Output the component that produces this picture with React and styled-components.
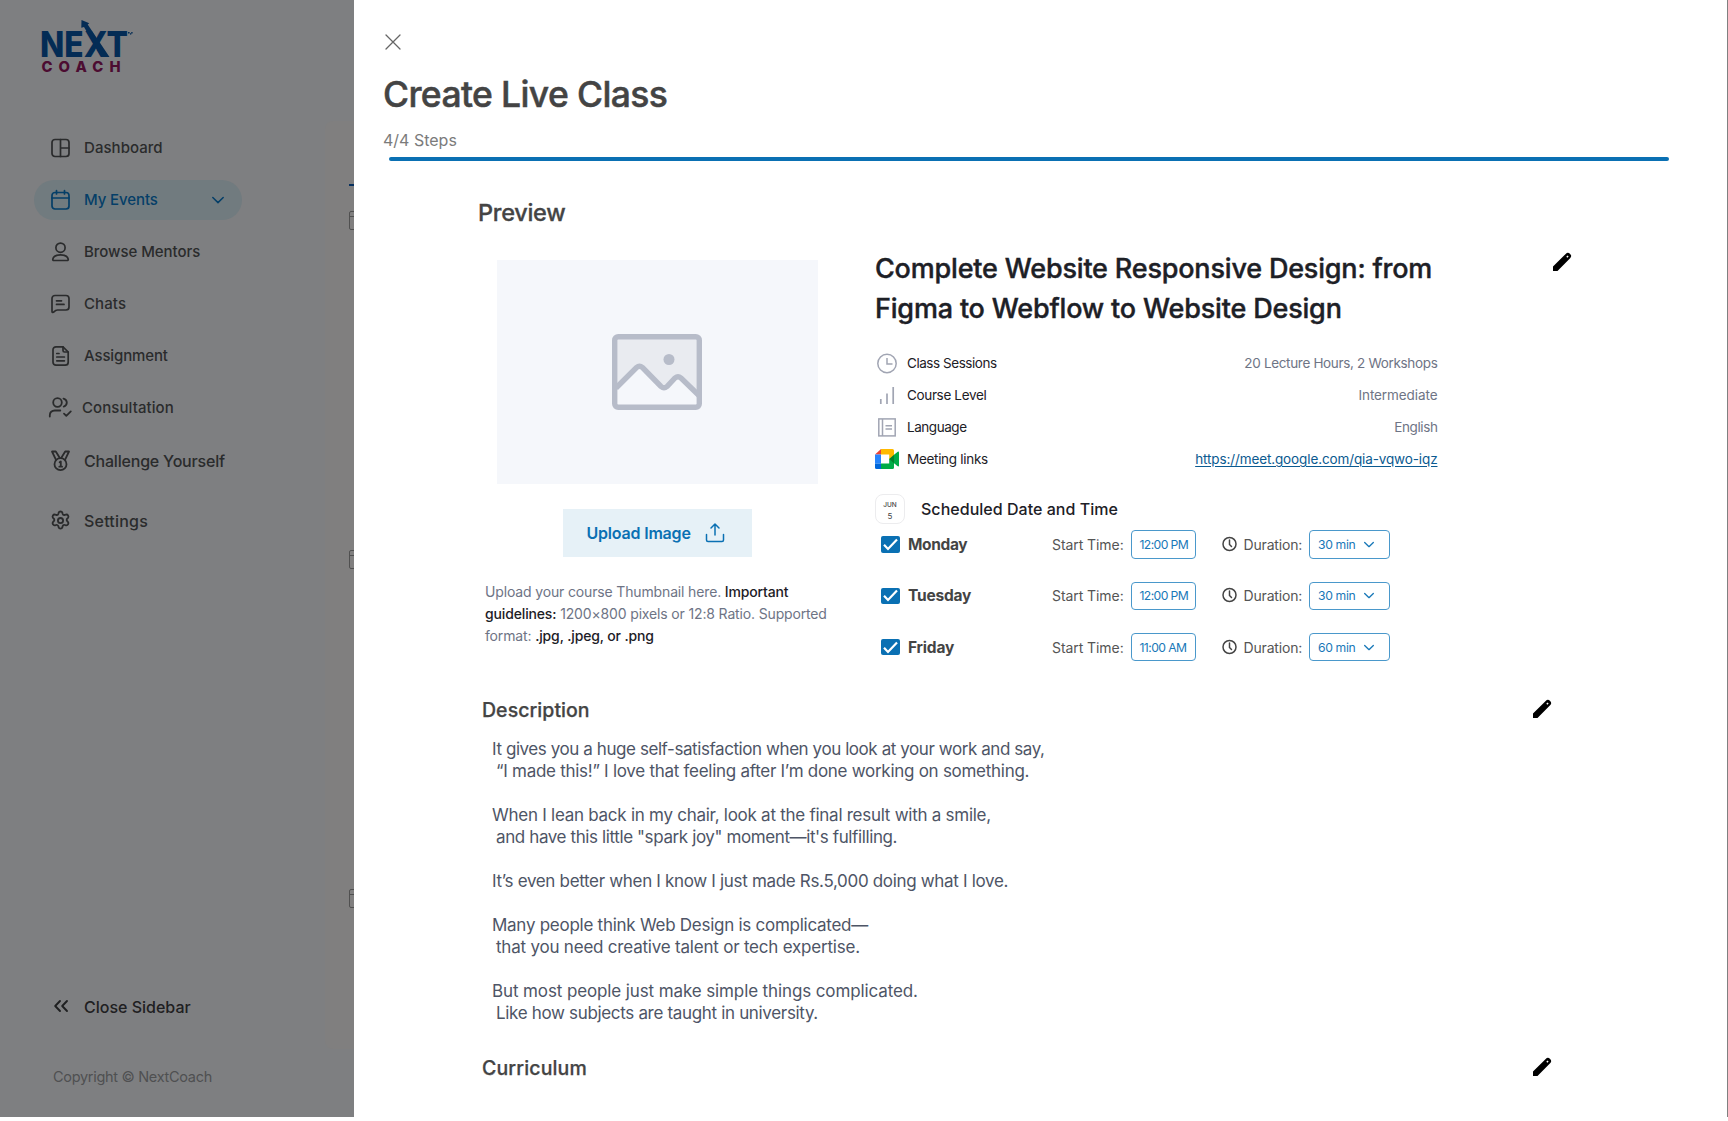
import React from "react";
import styled, { createGlobalStyle } from "styled-components";

const GlobalStyle = createGlobalStyle`
  *, *::before, *::after { box-sizing: border-box; }
  html, body { margin: 0; padding: 0; background: #fff; overflow: hidden; }
  body { font-family: Inter, "Liberation Sans", sans-serif; }
  h1, h2, h3, p { margin: 0; font-weight: 500; }
  svg { display: block; flex: none; overflow: visible; }
  button { font: inherit; border: 0; padding: 0; background: none; }
`;

const Frame = styled.div`
  display: flex;
  width: 1728px;
  height: 1117px;
  background: #808080;
  overflow: hidden;
`;

/* ---------- dimmed page behind the drawer ---------- */

const Sidebar = styled.aside`
  display: flex;
  flex-direction: column;
  width: 325px;
  background: #7e7f81;
`;

const LogoLink = styled.div`
  margin: 19px 0 0 41px;
  height: 56px;
`;

const Nav = styled.nav`
  display: flex;
  flex-direction: column;
  margin: 53px 0 0 34px;
  width: 208px;
`;

const NavItem = styled.div`
  display: flex;
  align-items: center;
  height: 40px;
  margin-bottom: ${(p) => p.$after ?? 12}px;
  padding: 0 18px 0 ${(p) => p.$pad ?? 16}px;
  border-radius: 20px;
  color: ${(p) => (p.$active ? "#053f68" : "#2a2b2c")};
  background: ${(p) => (p.$active ? "#717b7f" : "transparent")};
`;

const NavLabel = styled.span`
  flex: 1;
  margin-left: ${(p) => p.$gap ?? 14}px;
  padding-bottom: ${(p) => (p.$large ? 0 : 2)}px;
  font-size: ${(p) => (p.$large ? 16 : 15)}px;
  font-weight: 500;
  letter-spacing: ${(p) => p.$ls ?? 0}px;
  white-space: nowrap;
`;

const SidebarFooter = styled.div`
  display: flex;
  flex-direction: column;
  gap: 50px;
  margin: auto 0 30px 53px;
`;

const CloseSidebar = styled.div`
  display: flex;
  align-items: center;
  gap: 15px;
  height: 20px;
  font-size: 16px;
  font-weight: 500;
  letter-spacing: 0;
  color: #1f2021;
`;

const Copyright = styled.div`
  height: 20px;
  line-height: 20px;
  font-size: 14.5px;
  letter-spacing: ${(p) => p.$ls}px;
  color: #4f5051;
`;

const PageEdge = styled.div`
  display: flex;
  flex-direction: column;
  width: 29px;
  background: #7e7f81;
`;

const PageCard = styled.div`
  display: flex;
  flex-direction: column;
  margin-top: 121px;
  height: 928px;
  padding: 63px 0 0 24px;
  border-radius: 8px 0 0 8px;
  background: #807f7f;
  overflow: hidden;
`;

const TabUnderline = styled.div`
  height: 2px;
  background: #06305f;
`;

const CardGlyph = styled.div`
  width: 19px;
  height: 19px;
  margin-top: ${(p) => p.$top}px;
  flex: none;
  border: 1px solid #505050;
  border-radius: 2px;
  background: linear-gradient(#505050, #505050) 0 4px / 100% 1px no-repeat;
`;

/* ---------- drawer ---------- */

const Drawer = styled.main`
  display: flex;
  flex-direction: column;
  width: 1373px;
  height: 1117px;
  background: #fff;
`;

const DrawerHeader = styled.header`
  display: flex;
  flex-direction: column;
  padding: 32px 58px 0 29px;
`;

const CloseButton = styled.button`
  width: 20px;
  height: 20px;
`;

const Title = styled.h1`
  margin-top: 22px;
  font-size: 35.5px;
  line-height: 42px;
  letter-spacing: -0.63px;
  color: #444;
  -webkit-text-stroke: 0.5px #444;
`;

const Steps = styled.div`
  margin-top: 14px;
  font-size: 16px;
  line-height: 20px;
  color: #7b7b7b;
`;

const Progress = styled.div`
  height: 4px;
  margin: 7px 0 0 6px;
  border-radius: 2px;
  background: #0a70b3;
`;

const Body = styled.div`
  display: flex;
  flex-direction: column;
  padding: 37px 0 0 123px;
`;

const PreviewHeading = styled.h2`
  margin-left: 1px;
  font-size: 23.5px;
  line-height: 30px;
  letter-spacing: -0.28px;
  color: #444;
  -webkit-text-stroke: 0.3px #444;
`;

const PreviewSection = styled.section`
  display: flex;
  height: 433px;
`;

const Thumbnail = styled.div`
  display: flex;
  flex-direction: column;
  width: 398px;
  padding: 32px 0 0 8px;
`;

const Placeholder = styled.div`
  display: flex;
  align-items: center;
  justify-content: center;
  width: 321px;
  height: 224px;
  margin-left: 11.5px;
  background: #f5f7fb;
`;

const UploadButton = styled.button`
  display: flex;
  align-items: center;
  gap: 14px;
  width: 189px;
  height: 48px;
  margin: 24.5px 0 0 77.5px;
  padding-left: 24px;
  background: #e6f1f7;
  color: #0a70b3;
  font-size: 16px;
  font-weight: 600;
  letter-spacing: ${(p) => p.$ls}px;
`;

const Hint = styled.p`
  margin-top: 24.5px;
  font-size: 14px;
  line-height: 22px;
  letter-spacing: ${(p) => p.$ls}px;
  font-weight: 400;
  white-space: nowrap;
  color: #6e7485;
`;

const Strong = styled.span`
  font-weight: 500;
  color: #1d2026;
`;

const Details = styled.div`
  display: flex;
  flex-direction: column;
  width: 562.5px;
  padding-top: 21px;
`;

const CourseTitle = styled.h2`
  font-size: 27px;
  line-height: 40px;
  color: #1d2026;
  white-space: nowrap;
  -webkit-text-stroke: 0.4px #1d2026;
`;

const Line = styled.span`
  display: block;
  letter-spacing: ${(p) => p.$ls ?? 0}px;
`;

const Facts = styled.div`
  display: flex;
  flex-direction: column;
  margin-top: 18px;
`;

const Fact = styled.div`
  display: flex;
  align-items: center;
  height: 32px;
  font-size: 13.5px;
`;

const FactIcon = styled.div`
  display: flex;
  width: 32px;
`;

const FactLabel = styled.span`
  flex: 1;
  letter-spacing: ${(p) => p.$ls}px;
  color: #1d2026;
`;

const FactValue = styled.span`
  letter-spacing: ${(p) => p.$ls}px;
  color: #6e7485;
`;

const FactLink = styled.a`
  letter-spacing: ${(p) => p.$ls}px;
  color: #0b5a90;
  text-decoration: underline;
  text-underline-offset: 2px;
`;

const ScheduleHeading = styled.div`
  display: flex;
  align-items: center;
  gap: 16px;
  margin-top: 18.5px;
  height: 30px;
  font-size: 16px;
  font-weight: 500;
  letter-spacing: ${(p) => p.$ls}px;
  color: #1d2026;
`;

const DateBadge = styled.div`
  display: flex;
  flex-direction: column;
  align-items: center;
  width: 30px;
  height: 30px;
  padding-top: 6px;
  border: 1px solid #ececee;
  border-radius: 8px;
  font-size: 6.5px;
  line-height: 9px;
  letter-spacing: 0;
  color: #444;
`;

const BadgeDay = styled.span`
  font-size: 8px;
  font-weight: 400;
  line-height: 13px;
`;

const Days = styled.div`
  display: flex;
  flex-direction: column;
  gap: 23.2px;
  margin-top: 7.2px;
`;

const DayRow = styled.div`
  display: flex;
  align-items: center;
  height: 28px;
  padding-left: 6px;
`;

const Checkbox = styled.div`
  display: flex;
  align-items: center;
  justify-content: center;
  width: 19px;
  height: 16.5px;
  border-radius: 2px;
  background: #0a70b3;
`;

const DayName = styled.span`
  width: 144px;
  margin-left: 8px;
  font-size: 15.5px;
  font-weight: 700;
  letter-spacing: ${(p) => p.$ls}px;
  color: #444;
`;

const FieldLabel = styled.span`
  width: ${(p) => p.$w}px;
  font-size: 14px;
  letter-spacing: ${(p) => p.$ls}px;
  color: #555;
  white-space: nowrap;
`;

const Field = styled.div`
  display: flex;
  align-items: center;
  gap: ${(p) => p.$gap ?? 0}px;
  width: ${(p) => p.$w}px;
  height: 28.5px;
  padding-left: 8px;
  border: 1px solid #4a98cb;
  border-radius: 4px;
  font-size: 12.2px;
  letter-spacing: ${(p) => p.$ls}px;
  color: #1878b8;
  white-space: nowrap;
`;

const ClockSlot = styled.div`
  width: 47.5px;
  padding-left: 26px;
`;

const EditSlot = styled.div`
  margin: ${(p) => p.$top ?? 0}px 0 0 115.5px;
`;

const SectionRow = styled.div`
  display: flex;
  align-items: center;
  justify-content: space-between;
  width: 1069px;
  height: 24px;
  margin: ${(p) => p.$top}px 0 0 5px;

  > svg { margin-bottom: 2px; }
`;

const SectionHeading = styled.h3`
  font-size: 19.5px;
  line-height: 24px;
  letter-spacing: ${(p) => p.$ls}px;
  color: #444;
  -webkit-text-stroke: 0.25px #444;
`;

const Description = styled.p`
  margin: 16px 0 0 15px;
  font-size: 17px;
  line-height: 22px;
  font-weight: 400;
  color: #4e5566;
  white-space: pre;
`;

const DescLine = styled.span`
  display: block;
  height: 22px;
  padding-left: ${(p) => (p.$indent ? 4 : 0)}px;
  letter-spacing: ${(p) => p.$ls}px;
`;

/* ---------- drawings ---------- */

const Stroke = ({ size = 20, w = 1.7, box = 20, children }) => (
  <svg width={size} height={size} viewBox={`0 0 ${box} ${box}`} fill="none" stroke="currentColor" strokeWidth={w} strokeLinecap="round" strokeLinejoin="round">
    {children}
  </svg>
);

const Logo = () => (
  <svg width="94" height="56" viewBox="0 0 94 56" fontFamily="Inter, sans-serif" fontWeight="800">
    <text x="-1" y="38" fontSize="35.5" fill="#042c55" textLength="88" lengthAdjust="spacingAndGlyphs">NEXT</text>
    <text x="0.5" y="52.7" fontSize="14.8" fill="#4c0c31" textLength="79" lengthAdjust="spacing">COACH</text>
    <path d="M40.500 1 48.300 4.200 46.700 5.600 68.500 38H60.500L43 8 40.300 8.800Z" fill="#042c55" />
    <path d="M87 13h1.600v1.400h-1.600zM89.200 14h1v1.800h-1zM90.200 13h1.400v1.400h-1.400z" fill="#042c55" />
  </svg>
);

const DashboardIcon = () => (
  <Stroke>
    <rect x="2" y="1.5" width="17" height="17" rx="3" />
    <path d="M10.5 1.5v17M10.5 10h8.5" />
  </Stroke>
);
const CalendarIcon = () => (
  <Stroke>
    <rect x="2" y="2.5" width="17" height="16.5" rx="3" />
    <path d="M2 8h17M6.5 .5v3.5M14.5 .5v3.5" />
  </Stroke>
);
const UserIcon = () => (
  <Stroke>
    <circle cx="10.5" cy="5.7" r="4.6" />
    <path d="M2.8 17.2c.6-3 4-4.4 7.7-4.4s7.100 1.400 7.700 4.400c.1.700-.300 1.300-1.100 1.300H3.900c-.800 0-1.200-.600-1.100-1.300Z" />
  </Stroke>
);
const ChatIcon = () => (
  <Stroke>
    <path d="M5 1.500h11a3 3 0 0 1 3 3V13a3 3 0 0 1-3 3H7.500c-1.500 0-2.500.7-3.600 1.900-.8.900-1.900.6-1.900-.400V4.500a3 3 0 0 1 3-3Z" />
    <path d="M6.500 6.800h5M6.500 10.400h7.500" />
  </Stroke>
);
const FileIcon = () => (
  <Stroke>
    <path d="M6 .8h7l5.200 5.200v10.200a3 3 0 0 1-3 3H6a3 3 0 0 1-3-3V3.800a3 3 0 0 1 3-3Z" />
    <path d="M13 .8V4.500a1.500 1.500 0 0 0 1.500 1.500h3.700M6.800 7.500h2.200M6.800 11h7.600M6.800 14.800h7.600" />
  </Stroke>
);
const ConsultIcon = () => (
  <Stroke size={24} box={24} w={1.8}>
    <circle cx="9.500" cy="6.500" r="4.300" />
    <path d="M1.800 20.500v-1.200c0-3 2-4.800 5-4.800h5.500M15.500 2.600c2.200.6 3.300 2.200 3.300 4s-1.100 3.400-3.100 4M16 17.700l2.300 2.200 4.500-4.500" />
  </Stroke>
);
const MedalIcon = () => (
  <Stroke w={1.800}>
    <circle cx="10.500" cy="13.200" r="6" />
    <path d="M6 8.800 2 .5h3.800l3.700 6M15 8.800 19 .5h-3.800l-3.700 6M9.600 11.300l1.200-.8v5.200M9.300 15.700h2.800" />
  </Stroke>
);
const GearIcon = () => (
  <Stroke w={1.800}>
    <circle cx="10.500" cy="9.600" r="2.600" />
    <path d="M8.700 1.600c.4-1.500 3.200-1.500 3.600 0l.3 1.100c.3 1 1.300 1.500 2.300 1.200l1-.3c1.800-.5 3.300 2 2.100 3.300l-.8.800c-.7.700-.7 1.800 0 2.500l.8.800c1.200 1.300-.3 3.800-2.100 3.300l-1-.3c-1-.3-2 .3-2.300 1.300l-.3 1.100c-.4 1.500-3.200 1.500-3.600 0l-.3-1.100c-.3-1-1.300-1.600-2.300-1.300l-1 .3c-1.800.5-3.300-2-2.100-3.300l.8-.8c.7-.7.7-1.800 0-2.500l-.8-.8c-1.200-1.300.3-3.800 2.100-3.300l1 .3c1 .3 2-.2 2.300-1.200Z" />
  </Stroke>
);
const Chevron = ({ w = 12, s = 1.500 }) => (
  <svg width={w} height={w / 2} viewBox="0 0 12 6" fill="none" stroke="currentColor" strokeWidth={(s * 12) / w} strokeLinecap="round" strokeLinejoin="round">
    <path d="M.8.500 6 5.600 11.200.500" />
  </svg>
);
const DoubleChevron = () => (
  <svg width="16" height="14" viewBox="0 0 16 14" fill="none" stroke="currentColor" strokeWidth="1.900" strokeLinecap="round" strokeLinejoin="round">
    <path d="M7 1 2.200 6 7 11M14 1 9.200 6 14 11" />
  </svg>
);
const Pencil = () => (
  <svg width="18" height="18" viewBox="0 0 18 18">
    <path fillRule="evenodd" d="M0 18v-4.600L12.700.9a3 3 0 0 1 4.400 4.400L4.500 18ZM14.500 2.500 13.300 3.700 14.400 4.800 15.600 3.600Z" fill="#000" />
  </svg>
);
const PictureIcon = () => (
  <svg width="90" height="76" viewBox="0 0 90 76" fill="none">
    <path d="M3 54 24.500 33.500Q27.500 31 30.500 33.500L49 52.500Q52 55 55 52.500L63 44Q66 41.500 69 44L87 61V3H3Z" fill="#e9ebf0" />
    <rect x="2.700" y="2.700" width="84.600" height="70.600" rx="3.500" stroke="#b7bcc9" strokeWidth="5.400" />
    <path d="M4 54 24.500 33.500Q27.500 31 30.500 33.500L49 52.500Q52 55 55 52.500L63 44Q66 41.500 69 44L87 61.500" stroke="#b7bcc9" strokeWidth="5.400" />
    <circle cx="57" cy="25.500" r="5.500" fill="#b7bcc9" />
  </svg>
);
const UploadIcon = () => (
  <Stroke w={1.500}>
    <path d="M1.500 11.500v5.500a1.500 1.500 0 0 0 1.500 1.500h14a1.500 1.500 0 0 0 1.500-1.500v-5.500M10 12V1.300M6 5l4-4 4 4" />
  </Stroke>
);
const ClassClock = () => (
  <svg width="23" height="22" viewBox="0 0 23 22" fill="none" stroke="#a1a5b3" strokeWidth="1.500">
    <circle cx="12" cy="11.500" r="9.200" />
    <path d="M12 6v6h5.500" />
  </svg>
);
const Bars = () => (
  <svg width="23" height="20" viewBox="0 0 23 20" fill="none" stroke="#a1a5b3" strokeWidth="1.700">
    <path d="M5.800 14v5M12 8.500V19M18.200 2v17" />
  </svg>
);
const Book = () => (
  <svg width="23" height="20" viewBox="0 0 23 20" fill="none" stroke="#a1a5b3" strokeWidth="1.500">
    <rect x="3.800" y="1.900" width="16.400" height="17" />
    <path d="M7.500 2v17M10.500 8.800h6.500M10.500 12h6.500" />
  </svg>
);
const Meet = () => (
  <svg width="24" height="20" viewBox="0 0 24 20">
    <path d="M6 0h11.500q1.500 0 1.500 1.500V8l-4.800 3V5.500H6Z" fill="#ffba00" />
    <path d="M6 0v5.500H0Z" fill="#ea4335" />
    <path d="M0 5.500h6v9H0Z" fill="#2684fc" />
    <path d="M0 14.500h6V20H1.500Q0 20 0 18.500Z" fill="#0066da" />
    <path d="M6 14.500h8.200V9.800L19 12.500v6q0 1.500-1.500 1.500H6Z" fill="#00ac47" />
    <path d="M14.200 10 19 5.800v8.400Z" fill="#00832d" />
    <path d="M19 5.800l3.400-2.900Q24 1.800 24 3.500v13q0 1.700-1.600.6L19 14.200Z" fill="#00ac47" />
  </svg>
);
const Tick = () => (
  <svg width="15" height="13" viewBox="0 0 15 13" fill="none" stroke="#fff" strokeWidth="2.200">
    <path d="M1 6.800 5 11 14 1.500" />
  </svg>
);
const SmallClock = () => (
  <svg width="15" height="15" viewBox="0 0 15 15" fill="none" stroke="#444" strokeWidth="1.500" strokeLinecap="round">
    <circle cx="7.500" cy="7" r="6.500" />
    <path d="M7.500 3v4.500l2 2" />
  </svg>
);

/* ---------- content ---------- */

const NAV = [
  { label: "Dashboard", icon: DashboardIcon, ls: 0.05 },
  { label: "My Events", icon: CalendarIcon, active: true, ls: -0.1 },
  { label: "Browse Mentors", icon: UserIcon, ls: -0.05 },
  { label: "Chats", icon: ChatIcon, ls: 0.1 },
  { label: "Assignment", icon: FileIcon, ls: -0.13 },
  { label: "Consultation", icon: ConsultIcon, pad: 14, gap: 10, ls: 0.08, after: 13 },
  { label: "Challenge Yourself", icon: MedalIcon, large: true, ls: -0.2, after: 20 },
  { label: "Settings", icon: GearIcon, large: true, ls: 0.2 },
];

const FACTS = [
  { label: "Class Sessions", icon: ClassClock, value: "20 Lecture Hours, 2 Workshops", ls: -0.45, vls: -0.33 },
  { label: "Course Level", icon: Bars, value: "Intermediate", ls: -0.35, vls: -0.08 },
  { label: "Language", icon: Book, value: "English", ls: -0.45, vls: -0.4 },
  { label: "Meeting links", icon: Meet, link: "https://meet.google.com/qia-vqwo-iqz", ls: -0.3, vls: -0.12 },
];

const DAYS = [
  { day: "Monday", start: "12:00 PM", length: "30 min", ls: -0.35 },
  { day: "Tuesday", start: "12:00 PM", length: "30 min", ls: -0.2 },
  { day: "Friday", start: "11:00 AM", length: "60 min", ls: -0.2 },
];

const DESCRIPTION = [
  { text: "It gives you a huge self-satisfaction when you look at your work and say,", ls: -0.425 },
  { text: "“I made this!” I love that feeling after I’m done working on something.", ls: -0.275, indent: true },
  {},
  { text: "When I lean back in my chair, look at the final result with a smile,", ls: -0.265 },
  { text: "and have this little \"spark joy\" moment—it's fulfilling.", ls: -0.39, indent: true },
  {},
  { text: "It’s even better when I know I just made Rs.5,000 doing what I love.", ls: -0.325 },
  {},
  { text: "Many people think Web Design is complicated—", ls: -0.265 },
  { text: "that you need creative talent or tech expertise.", ls: -0.21, indent: true },
  {},
  { text: "But most people just make simple things complicated.", ls: -0.115 },
  { text: "Like how subjects are taught in university.", ls: -0.33, indent: true },
];

export default function App() {
  return (
    <>
      <GlobalStyle />
      <Frame>
        <Sidebar>
          <LogoLink><Logo /></LogoLink>
          <Nav>
            {NAV.map(({ label, icon: Icon, active, ls, large, pad, gap, after }) => (
              <NavItem key={label} $active={active} $pad={pad} $after={after}>
                <Icon />
                <NavLabel $ls={ls} $large={large} $gap={gap}>{label}</NavLabel>
                {active && <Chevron />}
              </NavItem>
            ))}
          </Nav>
          <SidebarFooter>
            <CloseSidebar><DoubleChevron />Close Sidebar</CloseSidebar>
            <Copyright $ls={-0.3}>Copyright © NextCoach</Copyright>
          </SidebarFooter>
        </Sidebar>
        <PageEdge>
          <PageCard>
            <TabUnderline />
            <CardGlyph $top={25} />
            <CardGlyph $top={320} />
            <CardGlyph $top={320} />
          </PageCard>
        </PageEdge>
        <Drawer>
          <DrawerHeader>
            <CloseButton aria-label="Close">
              <svg width="20" height="20" viewBox="0 0 20 20" stroke="#666" strokeWidth="1.300" strokeLinecap="round">
                <path d="M3 3 17 17M17 3 3 17" />
              </svg>
            </CloseButton>
            <Title>Create Live Class</Title>
            <Steps>4/4 Steps</Steps>
            <Progress />
          </DrawerHeader>
          <Body>
            <PreviewHeading>Preview</PreviewHeading>
            <PreviewSection>
              <Thumbnail>
                <Placeholder><PictureIcon /></Placeholder>
                <UploadButton $ls={-0.2}>Upload Image<UploadIcon /></UploadButton>
                <Hint $ls={-0.15}>
                  Upload your course Thumbnail here. <Strong>Important</Strong><br />
                  <Strong>guidelines:</Strong> 1200×800 pixels or 12:8 Ratio. Supported<br />
                  format: <Strong>.jpg, .jpeg, or .png</Strong>
                </Hint>
              </Thumbnail>
              <Details>
                <CourseTitle>
                  <Line $ls={-0.19}>Complete Website Responsive Design: from</Line>
                  <Line $ls={-0.18}>Figma to Webflow to Website Design</Line>
                </CourseTitle>
                <Facts>
                  {FACTS.map(({ label, icon: Icon, value, link, ls, vls }) => (
                    <Fact key={label}>
                      <FactIcon><Icon /></FactIcon>
                      <FactLabel $ls={ls}>{label}</FactLabel>
                      {link ? <FactLink $ls={vls}>{link}</FactLink> : <FactValue $ls={vls}>{value}</FactValue>}
                    </Fact>
                  ))}
                </Facts>
                <ScheduleHeading $ls={0.03}>
                  <DateBadge>JUN<BadgeDay>5</BadgeDay></DateBadge>
                  Scheduled Date and Time
                </ScheduleHeading>
                <Days>
                  {DAYS.map(({ day, start, length, ls }) => (
                    <DayRow key={day}>
                      <Checkbox><Tick /></Checkbox>
                      <DayName $ls={ls}>{day}</DayName>
                      <FieldLabel $w={78.5} $ls={-0.07}>Start Time:</FieldLabel>
                      <Field $w={65.5} $ls={-0.6}>{start}</Field>
                      <ClockSlot><SmallClock /></ClockSlot>
                      <FieldLabel $w={65.5} $ls={-0.17}>Duration:</FieldLabel>
                      <Field $w={81} $ls={-0.35} $gap={9}>{length}<Chevron w={10} s={1.3} /></Field>
                    </DayRow>
                  ))}
                </Days>
              </Details>
              <EditSlot $top={25}><Pencil /></EditSlot>
            </PreviewSection>
            <SectionRow $top={37}>
              <SectionHeading $ls={0.05}>Description</SectionHeading>
              <Pencil />
            </SectionRow>
            <Description>
              {DESCRIPTION.map(({ text, ls, indent }, i) => (
                <DescLine key={i} $ls={ls} $indent={indent}>{text}</DescLine>
              ))}
            </Description>
            <SectionRow $top={32}>
              <SectionHeading $ls={0.15}>Curriculum</SectionHeading>
              <Pencil />
            </SectionRow>
          </Body>
        </Drawer>
      </Frame>
    </>
  );
}
